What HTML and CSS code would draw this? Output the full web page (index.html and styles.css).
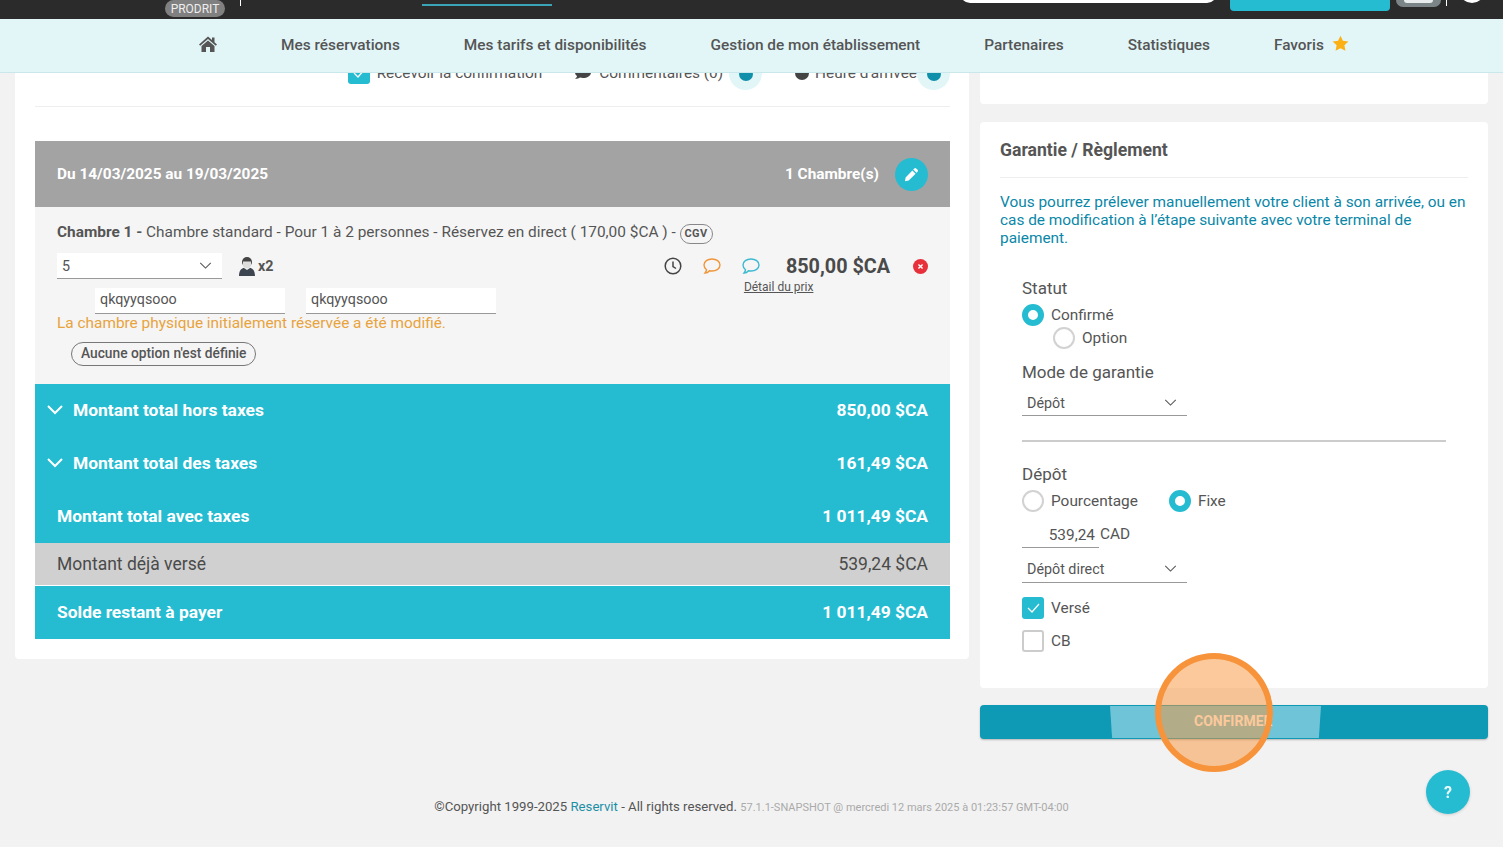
FILE: index.html
```html
<!DOCTYPE html>
<html lang="fr">
<head>
<meta charset="utf-8">
<title>Réservation</title>
<link rel="stylesheet" href="styles.css">
</head>
<body>
<header class="header">
  <div class="topbar">
    <span class="env-pill">PRODRIT</span>
    <span class="tick tick-a"></span>
    <span class="active-tab"></span>
    <span class="search"></span>
    <span class="top-btn"></span>
    <span class="toggle"><span class="toggle-in"></span></span>
    <span class="tick tick-b"></span>
    <span class="avatar"></span>
  </div>
  <nav class="nav">
    <svg class="home" viewBox="0 0 18 16"><path fill="#555" d="M9 .5l4 3.500V1.500h2.500v4.700L18 8.500l-1.200 1.300L9 3 1.200 9.800 0 8.500zM9 4.500l6.500 5.500v6H11v-5H7v5H2.500v-6z"/></svg>
    <a class="nav-link">Mes réservations</a>
    <a class="nav-link">Mes tarifs et disponibilités</a>
    <a class="nav-link">Gestion de mon établissement</a>
    <a class="nav-link">Partenaires</a>
    <a class="nav-link">Statistiques</a>
    <a class="nav-link fav">Favoris
      <svg class="star" viewBox="0 0 24 24"><path fill="#fbb116" d="M12 1l3.400 7.200 7.800 1-5.700 5.400 1.500 7.800L12 18.600l-7 3.800 1.500-7.800L.8 9.200l7.800-1z"/></svg>
    </a>
  </nav>
</header>

<main class="layout">
  <section class="card left-card">
    <div class="opts">
      <span class="check on big"><svg viewBox="0 0 22 22"><path d="M6 11l4 4 7-8" fill="none" stroke="#fff" stroke-width="1.200"/></svg></span>
      <span class="opt-text">Recevoir la confirmation</span>
      <svg class="opt-ico chat-ico" viewBox="0 0 16 14"><path fill="#444" d="M8 1c4 0 8 2 8 5.500S12 12 8 12c-1 0-2-.2-3-.4C4 12.500 2 13 0 13c1-1 2-2 2-3C.8 9 0 8 0 6.500 0 3 4 1 8 1z"/></svg>
      <span class="opt-text">Commentaires (0)</span>
      <span class="plus"><span class="plus-in"></span></span>
      <svg class="opt-ico clock-ico" viewBox="0 0 14 14"><circle cx="7" cy="7" r="7" fill="#444"/></svg>
      <span class="opt-text">Heure d'arrivée</span>
      <span class="plus last"><span class="plus-in"></span></span>
    </div>

    <div class="band">
      <strong>Du 14/03/2025 au 19/03/2025</strong>
      <div class="band-right">
        <strong>1 Chambre(s)</strong>
        <span class="pencil"><svg viewBox="0 0 16 16"><path fill="#fff" d="M11 1.500a1.500 1.500 0 0 1 2 0l1.500 1.500a1.500 1.500 0 0 1 0 2L13.300 6.200 9.800 2.700zM8.900 3.600l3.500 3.500L5 14.500 1 15.200l.7-4z"/></svg></span>
      </div>
    </div>

    <div class="room">
      <p class="room-title"><b>Chambre 1 -</b> Chambre standard - Pour 1 à 2 personnes - Réservez en direct ( 170,00 $CA ) - <span class="cgv">CGV</span></p>
      <div class="room-body">
        <div class="room-left">
          <div class="room-row">
            <div class="select room-select"><span>5</span><svg class="chev" viewBox="0 0 14 8"><path d="M1 1l6 6 6-6" fill="none" stroke="#555" stroke-width="1.200"/></svg></div>
            <svg class="guest" viewBox="0 0 16 20"><circle cx="8" cy="6" r="5" fill="#444"/><path d="M4 5.500h8v3a4 4 0 0 1-8 0z" fill="#ddd"/><path d="M0 20c0-6 3-8 5-8l3 2 3-2c2 0 5 2 5 8z" fill="#3d4650"/></svg>
            <b class="guests">x2</b>
          </div>
          <div class="names">
            <span class="name-field">qkqyyqsooo</span>
            <span class="name-field">qkqyyqsooo</span>
          </div>
        </div>
        <div class="room-right">
          <div class="actions">
            <svg class="act clock" viewBox="0 0 18 18"><circle cx="9" cy="9" r="7.800" fill="none" stroke="#444" stroke-width="1.500"/><path d="M9 4.500V9.500l3 2" fill="none" stroke="#444" stroke-width="1.500"/></svg>
            <svg class="act bubble" viewBox="0 0 18 16"><path d="M9 1c4.400 0 8 2.500 8 6s-3.600 6-8 6c-.9 0-1.700-.1-2.500-.3C5.500 14 3.500 15 2 15c.8-1 1.500-2 1.500-3.300C2 10.600 1 9 1 7c0-3.500 3.600-6 8-6z" fill="none" stroke="#f0953a" stroke-width="1.400"/></svg>
            <svg class="act bubble blue" viewBox="0 0 18 16"><path d="M9 1c4.400 0 8 2.500 8 6s-3.600 6-8 6c-.9 0-1.700-.1-2.500-.3C5.500 14 3.500 15 2 15c.8-1 1.500-2 1.500-3.300C2 10.600 1 9 1 7c0-3.500 3.600-6 8-6z" fill="none" stroke="#3db9d0" stroke-width="1.400"/></svg>
            <b class="price">850,00 $CA</b>
            <svg class="remove" viewBox="0 0 16 16"><circle cx="8" cy="8" r="8" fill="#e8303a"/><path d="M5.800 5.800l4.400 4.400M10.200 5.800l-4.400 4.400" stroke="#fff" stroke-width="1.500"/></svg>
          </div>
          <a class="detail">Détail du prix</a>
        </div>
      </div>
      <p class="warn">La chambre physique initialement réservée a été modifié.</p>
      <span class="no-option">Aucune option n'est définie</span>
    </div>

    <div class="total teal"><span class="total-l"><svg class="down" viewBox="0 0 16 10"><path d="M1 1l7 7 7-7" fill="none" stroke="#fff" stroke-width="2"/></svg>Montant total hors taxes</span><span>850,00 $CA</span></div>
    <div class="total teal"><span class="total-l"><svg class="down" viewBox="0 0 16 10"><path d="M1 1l7 7 7-7" fill="none" stroke="#fff" stroke-width="2"/></svg>Montant total des taxes</span><span>161,49 $CA</span></div>
    <div class="total teal"><span>Montant total avec taxes</span><span>1 011,49 $CA</span></div>
    <div class="total paid"><span>Montant déjà versé</span><span>539,24 $CA</span></div>
    <div class="total teal"><span>Solde restant à payer</span><span>1 011,49 $CA</span></div>
  </section>

  <aside class="right-col">
    <div class="card stub"></div>
    <section class="card pay">
      <h2 class="pay-title">Garantie / Règlement</h2>
      <p class="pay-info">Vous pourrez prélever manuellement votre client à son arrivée, ou en cas de modification à l’étape suivante avec votre terminal de paiement.</p>
      <div class="form">
        <div class="label statut">Statut</div>
        <div class="choice c-conf"><span class="radio on"></span>Confirmé</div>
        <div class="choice c-opt"><span class="radio"></span>Option</div>
        <div class="label mode">Mode de garantie</div>
        <div class="select pay-select"><span>Dépôt</span><svg class="chev" viewBox="0 0 14 8"><path d="M1 1l6 6 6-6" fill="none" stroke="#555" stroke-width="1.200"/></svg></div>
        <hr class="sep">
        <div class="label depot">Dépôt</div>
        <div class="choices">
          <div class="choice"><span class="radio"></span>Pourcentage</div>
          <div class="choice"><span class="radio on"></span>Fixe</div>
        </div>
        <div class="amount"><span class="amount-val">539,24</span><span class="cur">CAD</span></div>
        <div class="select pay-select direct"><span>Dépôt direct</span><svg class="chev" viewBox="0 0 14 8"><path d="M1 1l6 6 6-6" fill="none" stroke="#555" stroke-width="1.200"/></svg></div>
        <div class="choice c-verse"><span class="check on"><svg viewBox="0 0 22 22"><path d="M6 11l4 4 7-8" fill="none" stroke="#fff" stroke-width="1.200"/></svg></span>Versé</div>
        <div class="choice c-cb"><span class="check"></span>CB</div>
      </div>
    </section>
    <button class="confirm"><span class="confirm-hover">CONFIRMER</span><span class="spot"></span></button>
  </aside>
</main>

<footer class="footer">©Copyright 1999-2025 <a class="brand">Reservit</a> - All rights reserved. <small>57.1.1-SNAPSHOT @ mercredi 12 mars 2025 à 01:23:57 GMT-04:00</small></footer>
<button class="help">?</button>
</body>
</html>
```
FILE: styles.css
```css
* { box-sizing: border-box; }
html, body { margin: 0; height: 847px; overflow: hidden; }
body { background: #f2f2f2; font-family: Roboto, "Liberation Sans", sans-serif; color: #555; font-size: 15.400px; }
p, h2 { margin: 0; }

.header { position: fixed; top: 0; left: 0; right: 0; z-index: 5; }
.topbar { height: 19px; background: #2b2b2b; display: flex; align-items: flex-start; overflow: hidden; }
.env-pill { margin-left: 165px; width: 60px; height: 17px; border-radius: 9px; background: #808080; color: #eee; font-size: 12px; line-height: 18px; text-align: center; }
.tick { width: 1px; height: 6px; background: #fff; }
.tick-a { margin-left: 15px; }
.active-tab { margin-left: 181px; margin-top: 4px; width: 130px; height: 2px; background: #3aa3b5; }
.search { margin-left: 408px; margin-top: -17px; width: 257px; height: 20px; background: #fff; border-radius: 10px; }
.top-btn { margin-left: 13px; width: 160px; height: 11px; background: #25bcd2; border-radius: 0 0 4px 4px; }
.toggle { margin-left: 6px; width: 45px; height: 7px; background: #7b8487; border-radius: 0 0 8px 8px; display: flex; justify-content: center; }
.toggle-in { width: 29px; height: 3px; background: #e8ecec; border-radius: 0 0 3px 3px; }
.tick-b { margin-left: 5px; }
.avatar { margin-left: 12px; margin-top: -23px; width: 26px; height: 26px; background: #fff; border-radius: 50%; }

.nav { height: 54px; background: #e2f6f8; border-bottom: 1px solid #c9e8ec; display: flex; align-items: center; gap: 64px; padding: 0 0 1px 199px; font-weight: 500; font-size: 15.400px; }
.home { width: 18px; height: 16px; margin-top: -2px; }
.nav-link { color: #555; white-space: nowrap; }
.fav { display: flex; align-items: center; gap: 8px; }
.star { width: 17px; height: 17px; margin-top: -3px; }

.layout { display: grid; grid-template-columns: 954px 508px; column-gap: 11px; padding-left: 15px; align-items: start; }
.card { background: #fff; border-radius: 4px; }
.left-card { padding: 0 19px 20px 20px; height: 659px; }

.opts { height: 107px; padding-top: 40px; border-bottom: 1px solid #eee; display: flex; align-items: center; justify-content: flex-end; }
.opt-text { font-size: 15.400px; color: #555; white-space: nowrap; }
.check { width: 22px; height: 22px; border: 2px solid #ccc; border-radius: 3px; background: #fff; display: inline-block; flex: none; }
.check.on { background: #25bcd2; border: 0; }
.check svg { display: block; width: 22px; height: 22px; }
.big { margin-right: 7px; }
.opt-ico { flex: none; }
.chat-ico { width: 16px; height: 14px; margin: 0 8px 0 33px; }
.clock-ico { width: 14px; height: 14px; margin: 0 6px 0 33px; }
.plus { width: 33px; height: 33px; border-radius: 50%; background: #e2f6f8; margin: 1px 0 0 6px; display: flex; align-items: center; justify-content: center; flex: none; }
.plus.last { margin-left: 0; }
.plus-in { width: 14px; height: 14px; border-radius: 50%; background: #108fab; }

.band { margin-top: 34px; height: 66px; background: #a3a3a3; color: #fff; padding: 0 22px; display: flex; align-items: center; justify-content: space-between; font-size: 15.400px; }
.band strong { font-weight: 700; }
.band-right { display: flex; align-items: center; gap: 16px; }
.pencil { width: 33px; height: 33px; border-radius: 50%; background: #25bcd2; display: flex; align-items: center; justify-content: center; }
.pencil svg { width: 15px; height: 15px; }

.room { height: 177px; background: #f5f5f5; padding: 16px 22px 0; }
.room-title { font-size: 15.400px; line-height: 18px; height: 30px; white-space: nowrap; }
.room-title b { font-weight: 700; }
.cgv { display: inline-block; border: 1px solid #888; border-radius: 10px; padding: 0 4px; font-size: 11px; font-weight: 700; line-height: 18px; letter-spacing: .4px; vertical-align: 0; }
.room-body { display: flex; justify-content: space-between; }
.room-row { display: flex; align-items: center; height: 26px; }
.select { display: flex; align-items: center; justify-content: space-between; background: #fff; border-bottom: 1px solid #999; font-size: 14.300px; padding: 0 5px; }
.room-select { width: 165px; height: 26px; padding-right: 10px; }
.chev { width: 13px; height: 7px; }
.guest { width: 16px; height: 20px; margin-left: 17px; }
.guests { margin-left: 3px; font-size: 14.300px; font-weight: 700; }
.names { display: flex; gap: 21px; padding-left: 38px; margin-top: 9px; }
.name-field { width: 190px; height: 26px; background: #fff; border-bottom: 1px solid #999; padding: 0 5px; font-size: 14.300px; line-height: 23px; }
.room-right { display: flex; flex-direction: column; align-items: flex-start; }
.actions { display: flex; align-items: center; height: 26px; }
.act { width: 18px; height: 18px; flex: none; }
.bubble { margin-left: 21px; height: 16px; }
.price { margin-left: 26px; font-size: 19.800px; font-weight: 700; color: #4a4a4a; white-space: nowrap; }
.remove { width: 15px; height: 15px; margin-left: 23px; flex: none; }
.detail { margin: 1px 0 0 80px; font-size: 12px; line-height: 14px; text-decoration: underline; }
.warn { color: #e8a33d; font-size: 15.400px; line-height: 18px; }
.no-option { display: inline-block; margin: 10px 0 0 14px; height: 24px; line-height: 20px; padding: 0 9px; border: 1px solid #777; border-radius: 12px; font-size: 13.750px; font-weight: 500; white-space: nowrap; }

.total { display: flex; justify-content: space-between; align-items: center; padding: 0 22px; font-size: 17.400px; }
.total.teal { height: 53px; padding-bottom: 2px; background: #25bcd2; color: #fff; font-weight: 700; }
.total.paid { height: 42px; background: #d0d0d0; color: #4a4a4a; font-size: 17.500px; margin-bottom: 1px; }
.total-l { display: flex; align-items: center; }
.down { width: 16px; height: 10px; margin: 0 10px 0 -10px; }

.right-col { display: flex; flex-direction: column; }
.stub { height: 104px; }
.pay { margin-top: 18px; height: 566px; padding: 0 20px; }
.pay-title { height: 56px; line-height: 56px; font-size: 17.600px; font-weight: 700; color: #555; border-bottom: 1px solid #eee; }
.pay-info { margin-top: 15px; font-size: 15.400px; line-height: 18px; color: #0a87a8; }
.form { padding: 0 22px; }
.label { font-size: 17px; line-height: 20px; }
.statut { margin-top: 31px; }
.mode { margin-top: 13px; }
.depot { margin-top: 22px; }
.choice { display: flex; align-items: center; gap: 7px; font-size: 15.400px; height: 22px; }
.radio { width: 22px; height: 22px; border-radius: 50%; border: 2px solid #d2d2d2; background: #fff; flex: none; }
.radio.on { border: 6px solid #25bcd2; }
.c-conf { margin-top: 6px; }
.c-opt { margin: 1px 0 0 31px; }
.pay-select { width: 165px; height: 26px; margin-top: 8px; padding-right: 10px; }
.sep { border: 0; height: 2px; background: #ccc; margin: 24px 0 0; width: 424px; }
.choices { display: flex; gap: 31px; margin-top: 6px; }
.amount { display: flex; align-items: flex-end; margin-top: 12px; height: 24px; font-size: 15.400px; }
.amount-val { width: 77px; height: 24px; border-bottom: 1px solid #999; text-align: right; padding-right: 4px; line-height: 22px; }
.cur { height: 24px; line-height: 20px; margin-left: 1px; }
.direct { margin-top: 9px; padding-bottom: 2px; }
.c-verse { margin-top: 14px; }
.c-cb { margin-top: 11px; }

.confirm { position: relative; margin: 17px 0 0; height: 34px; width: 508px; padding: 0; border: 0; border-radius: 4px; background: #0e9ab5; box-shadow: 0 1px 2px rgba(0,0,0,.25); display: block; font-family: inherit; }
.confirm-hover { position: absolute; left: 130px; top: 1px; width: 211px; height: 32px; background: #6fc4d8; clip-path: polygon(0 0, 100% 0, 99% 100%, 1% 100%); color: #fff; font-size: 14px; font-weight: 700; line-height: 30px; padding-left: 84px; text-align: left; white-space: nowrap; }
.spot { position: absolute; left: 175px; top: -52px; width: 118px; height: 119px; border-radius: 50%; border: 6px solid #f7933a; background: rgba(247,147,58,.5); }

.footer { position: absolute; left: 0; right: 0; top: 799px; text-align: center; font-size: 13.200px; line-height: 16px; white-space: nowrap; }
.brand { color: #1c8fa6; }
.footer small { font-size: 11px; color: #aaa; }
.help { position: fixed; left: 1426px; top: 770px; width: 44px; height: 44px; border-radius: 50%; border: 0; background: #25bcd2; color: #e8fbfd; font-size: 16px; font-weight: 700; font-family: inherit; box-shadow: 0 1px 3px rgba(0,0,0,.15); }
```
